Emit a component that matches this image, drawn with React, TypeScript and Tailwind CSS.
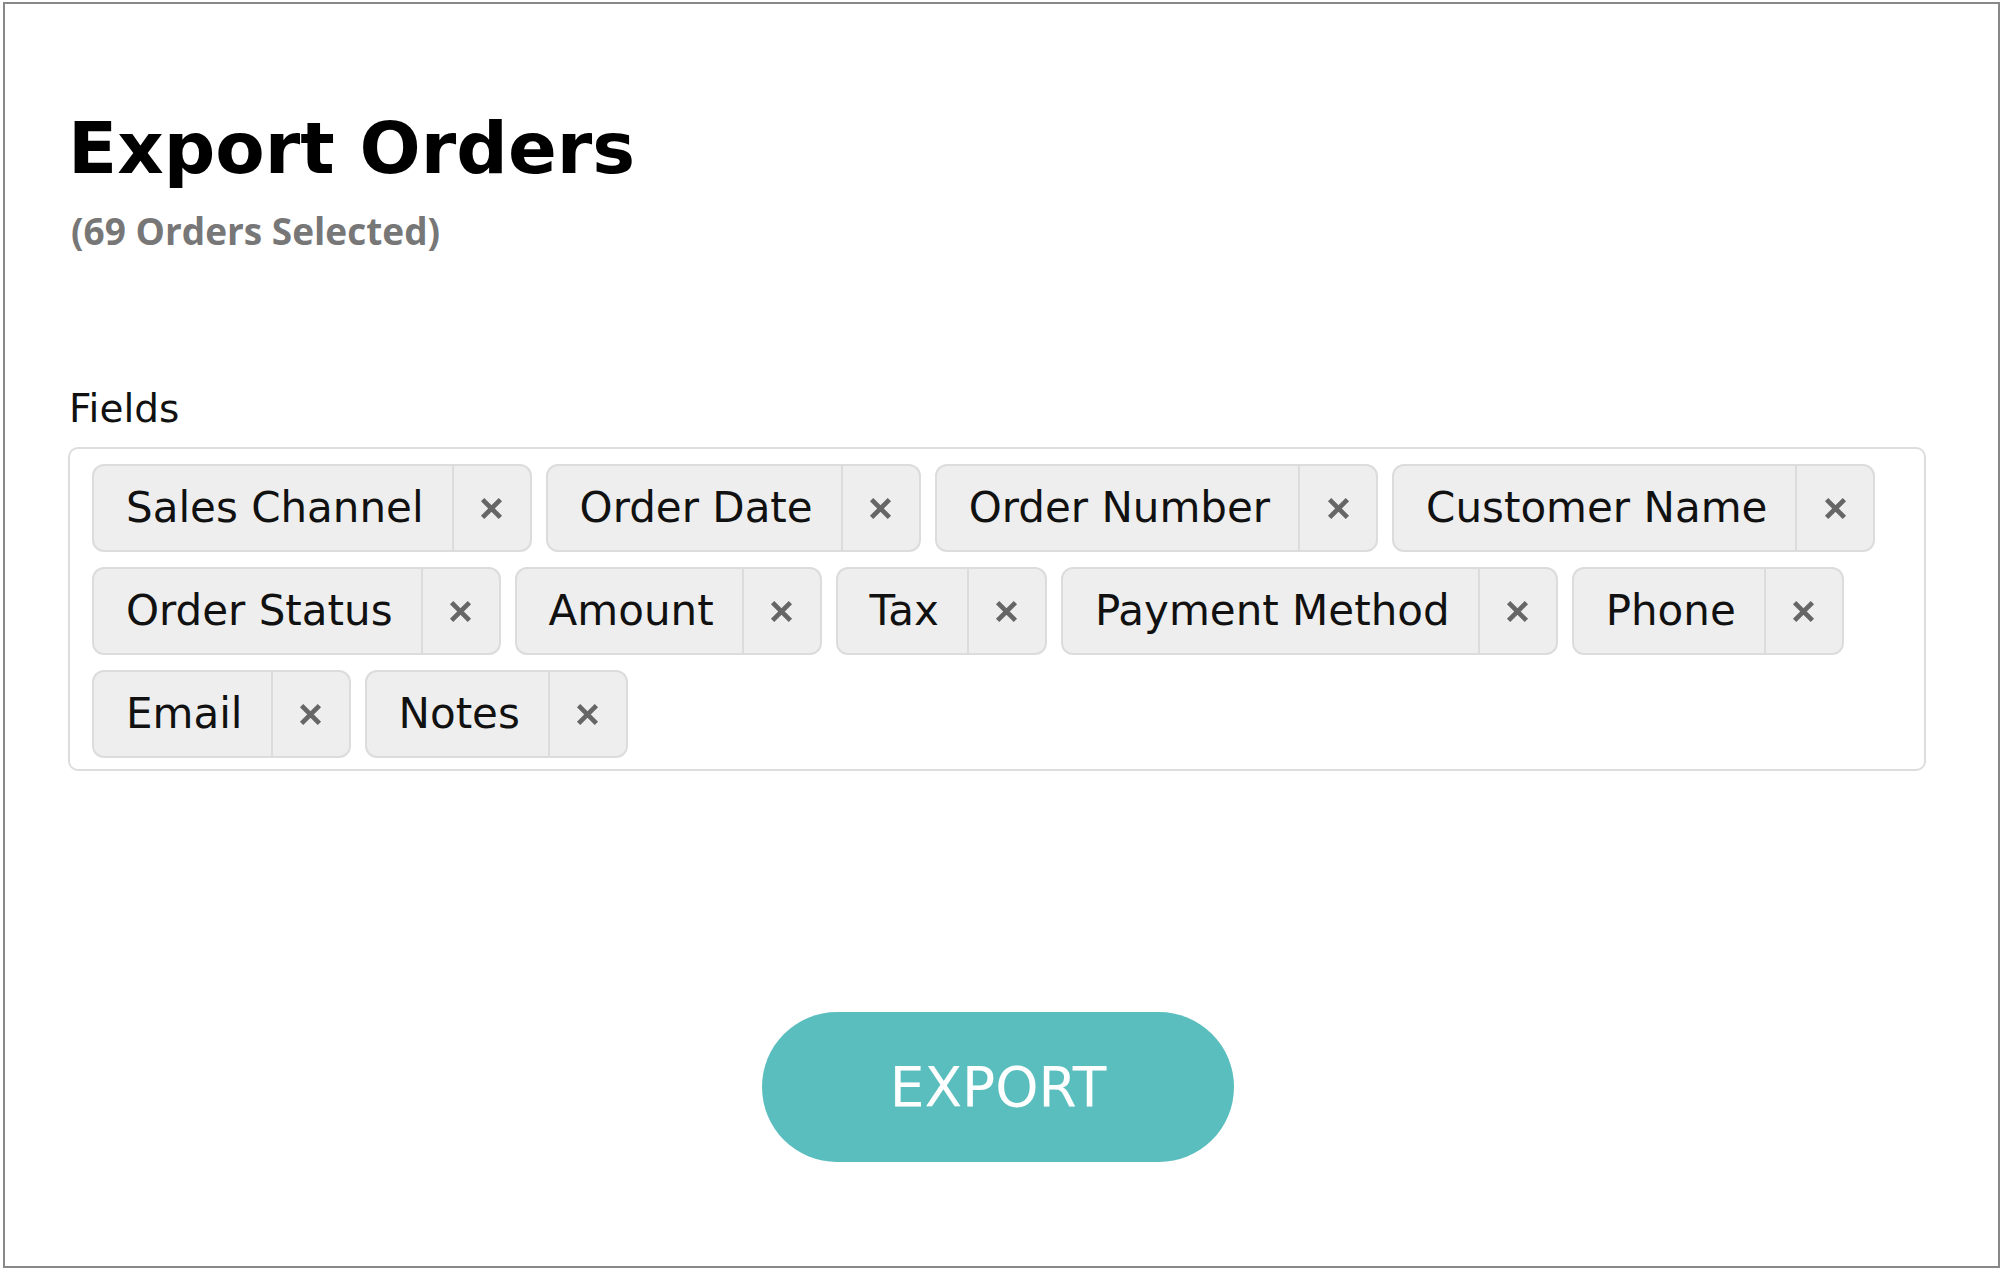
const fields = [
    "Sales Channel",
    "Order Date",
    "Order Number",
    "Customer Name",
    "Order Status",
    "Amount",
    "Tax",
    "Payment Method",
    "Phone",
    "Email",
    "Notes",
];

function CloseIcon() {
    return (
        <svg width="23" height="23" viewBox="0 0 22 22" fill="none">
            <path d="M2.5 2.5L19.5 19.5M19.5 2.5L2.5 19.5" stroke="#666666" strokeWidth="4.5" />
        </svg>
    );
}

function FieldChip({ label }: { label: string }) {
    return (
        <div className="flex h-[88px] items-stretch rounded-[12px] border-2 border-[#dcdcdc] bg-[#eeeeee]">
            <span className="flex items-center pl-[32px] pr-[28px] text-[42px] leading-none text-[#111111]">
                {label}
            </span>
            <button className="flex w-[78px] items-center justify-center border-l-2 border-[#dcdcdc]">
                <CloseIcon />
            </button>
        </div>
    );
}

export default function App() {
    return (
        <div className="h-[1270px] w-[2002px] bg-white pl-[3px] pt-[2px] font-['DejaVu_Sans',sans-serif]">
            <div className="flex h-[1266px] w-[1997px] flex-col border-2 border-[#888888] px-[63px] pt-[108px]">
                <h1 className="text-[72px] font-bold leading-[72px] text-black">Export Orders</h1>
                <p className="ml-[3px] mt-[28px] font-['Open_Sans',sans-serif] text-[37px] font-bold leading-[38px] text-[#777777]">
                    (69 Orders Selected)
                </p>

                <label className="ml-[1px] mt-[139px] text-[39px] leading-[39px] text-[#111111]">Fields</label>
                <div className="mt-[19px] flex w-[1858px] flex-wrap gap-x-[14px] gap-y-[15px] rounded-[10px] border-2 border-[#dddddd] px-[22px] pb-[11px] pt-[15px]">
                    {fields.map((f) => (
                        <FieldChip key={f} label={f} />
                    ))}
                </div>

                <button className="ml-[694px] mt-[241px] flex h-[150px] w-[472px] items-center justify-center rounded-full bg-[#5bbebe] text-[55px] leading-none text-white">
                    EXPORT
                </button>
            </div>
        </div>
    );
}
